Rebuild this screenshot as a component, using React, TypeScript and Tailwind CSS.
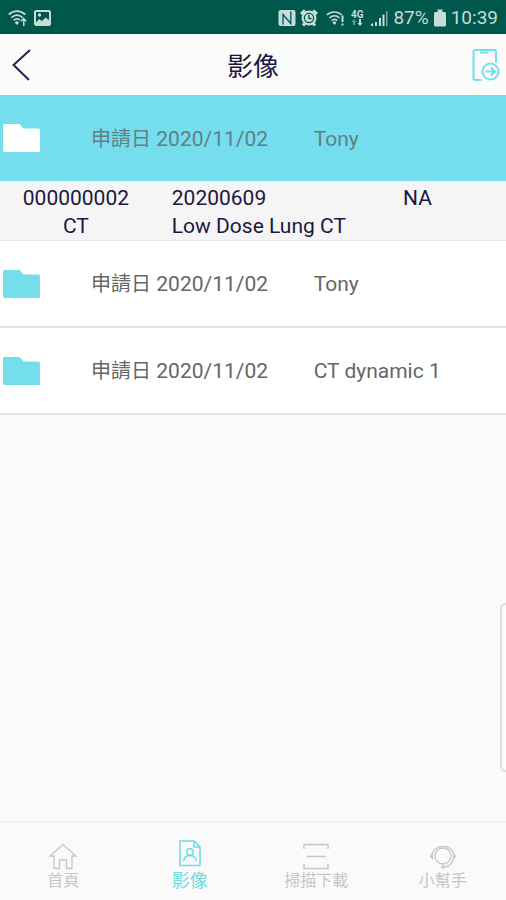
const studies = [
  { id: 1, date: "2020/11/02", name: "Tony", open: true },
  { id: 2, date: "2020/11/02", name: "Tony", open: false },
  { id: 3, date: "2020/11/02", name: "CT dynamic 1", open: false },
];

function StatusBar() {
  return (
    <div className="flex h-[34px] items-center bg-[#00574b] px-2 pt-px text-[#c5dcd8]">
      <svg className="h-[18px] w-5" viewBox="0 0 20 18" fill="none" stroke="currentColor" strokeWidth="1.8">
        <path d="M0.8 5.5C5.5 1 12.5 1 17.2 5.5M3.3 8.6C6.8 5.6 11.2 5.6 14.7 8.6M5.6 11.4C7.8 9.6 10.2 9.6 12 11.2" />
        <path d="M6.6 13.4L9 12l2 1.4L9 16z" fill="currentColor" stroke="none" />
        <path d="M13 12.2l2.6-2.7 2.6 2.7M15.8 10v7" strokeWidth="1.5" />
      </svg>
      <svg className="ml-[6px] h-[18px] w-[17px]" viewBox="0 0 17 18">
        <path fillRule="evenodd" fill="currentColor" d="M1.5 1h14l1.500 1.500v13L15.500 17h-14L0 15.500v-13zM2 3v10.500l3-3.500 3 2 3.500-3.500L15 11V3z" />
        <circle cx="5.500" cy="6" r="1.700" fill="currentColor" />
      </svg>
      <div className="ml-auto flex items-center">
        <svg className="h-[18px] w-[18px]" viewBox="0 0 18 18">
          <rect x="0.500" y="1" width="17" height="16" rx="2" fill="currentColor" />
          <path d="M5 15.500V5.500L12.800 14.500V2.500" fill="none" stroke="#00574b" strokeWidth="1.300" />
        </svg>
        <svg className="ml-1 h-[18px] w-[18px]" viewBox="0 0 18 18" fill="none" stroke="currentColor">
          <path d="M1 5l4-3.500M17 5l-4-3.500M3 16.500l2.500-3M15 16.500l-2.500-3" strokeWidth="3" />
          <circle cx="9" cy="9" r="7.500" fill="currentColor" stroke="none" />
          <circle cx="9" cy="9" r="4.600" stroke="#00574b" strokeWidth="1.200" />
          <path d="M9 6v3.500h2.500" stroke="#00574b" strokeWidth="1.300" />
        </svg>
        <svg className="ml-2 h-[18px] w-5" viewBox="0 0 20 18" fill="none" stroke="currentColor" strokeWidth="1.600">
          <path d="M0.800 6C5 2 11.500 2 16 6M3.300 9C6.500 6 10.500 6 13.500 9M5.600 11.700C7.500 10 9.500 10 11.300 11.700" />
          <path d="M6.300 13.500L8.500 12.300l2 1.200-2 2.500z" fill="currentColor" stroke="none" />
          <path d="M16.500 6.500v6.500M16.500 14.500v2" strokeWidth="2" />
        </svg>
        <div className="ml-1 flex w-[14px] flex-col items-center">
          <span className="font-['Roboto'] text-[10px] leading-[9px] font-bold">4G</span>
          <svg className="h-[7px] w-3" viewBox="0 0 12 7" fill="currentColor">
            <path d="M3 0l2.500 3H4v3H2V3H.5z" opacity=".5" />
            <path d="M9 7L6.500 4H8V0h2v4h1.500z" />
          </svg>
        </div>
        <svg className="ml-[6px] h-[18px] w-[18px]" viewBox="0 0 18 18" fill="currentColor">
          <path d="M1 15l2-1v3H1zM5 13h2v4H5zM9 9h2v8H9zM12.500 5.500h2V17h-2z" />
          <path d="M16 2h1.500v15H16z" opacity=".6" />
        </svg>
        <span className="ml-[5px] font-['Roboto'] text-[19px] leading-6">87%</span>
        <svg className="ml-[5px] h-[18px] w-3" viewBox="0 0 12 18" fill="currentColor">
          <path d="M3.500 0.500h5V3H11l1 1v12.500l-1 1H1l-1-1V4l1-1h2.500z" />
        </svg>
        <span className="ml-[5px] font-['Roboto'] text-[19px] leading-6">10:39</span>
      </div>
    </div>
  );
}

function Header() {
  return (
    <header className="grid h-[61px] grid-cols-[48px_1fr_48px] items-center bg-[#fbfbfc]">
      <button type="button" aria-label="返回" className="pl-3">
        <svg className="h-8 w-5" viewBox="0 0 20 32" fill="none" stroke="#2a2350" strokeWidth="2">
          <path d="M18 1L1.500 16 17 31" />
        </svg>
      </button>
      <h1 className="pt-1 text-center text-[26px] leading-8 text-[#1c1740]">影像</h1>
      <button type="button" aria-label="傳送到手機" className="pl-[14px]">
        <svg className="h-8 w-7" viewBox="0 0 28 32" fill="none" stroke="#73dfec" strokeWidth="2">
          <path d="M9.500 31H3a1.500 1.500 0 0 1-1.500-1.500v-27A1.500 1.500 0 0 1 3 1h19.500A1.500 1.500 0 0 1 24 2.500V14" />
          <path d="M8 3.500h8.500" strokeWidth="2" />
          <circle cx="18.500" cy="22.500" r="8" />
          <path d="M13.500 22.500h9M18.800 18.500l4 4-4 4" />
        </svg>
      </button>
    </header>
  );
}

function StudyRow({ study }: { study: (typeof studies)[number] }) {
  return (
    <button
      type="button"
      aria-expanded={study.open}
      className={
        study.open
          ? "grid h-[86px] w-full grid-cols-[18%_44%_38%] items-center bg-[#74deee] text-left text-[#627f84]"
          : "grid h-[87px] w-full grid-cols-[18%_44%_38%] items-center border-b-2 border-[#e4e4e4] bg-white text-left text-[#666]"
      }
    >
      <svg
        className={study.open ? "ml-[3px] h-7 w-[37px] text-white" : "ml-[3px] h-7 w-[37px] text-[#74deea]"}
        viewBox="0 0 37 28"
        fill="currentColor"
      >
        <path d="M1.500 0H16.500L20.500 4.500H35.500A1.500 1.500 0 0 1 37 6V26.500A1.500 1.500 0 0 1 35.500 28H1.500A1.500 1.500 0 0 1 0 26.500V1.500A1.500 1.500 0 0 1 1.500 0z" />
      </svg>
      <span className="pt-px whitespace-nowrap">
        <span className="text-xl leading-7">申請日</span> {study.date}
      </span>
      <span className="pt-px whitespace-nowrap">{study.name}</span>
    </button>
  );
}

function StudyDetail() {
  return (
    <div className="grid grid-cols-[30%_35%_35%] border-b border-[#e8e8e8] bg-[#f5f5f5] pt-[3px] leading-7 whitespace-nowrap text-[#1c1740]">
      <div className="text-center">000000002</div>
      <div className="pl-5">20200609</div>
      <div className="text-center">NA</div>
      <div className="text-center">CT</div>
      <div className="pl-5">Low Dose Lung CT</div>
    </div>
  );
}

function TabBar() {
  return (
    <nav className="grid h-[79px] grid-cols-4 border-t-2 border-[#f1f1f1] pt-4 text-base leading-5 text-[#c6c6c6]">
      <a href="#home" className="flex flex-col items-center">
        <svg className="h-8 w-7" viewBox="0 0 28 32" fill="none" stroke="currentColor" strokeWidth="1.300">
          <path d="M14 5.500L1 17h4v12.500h5.500v-8.500h7v8.500H23V17h4z" />
        </svg>
        首頁
      </a>
      <a href="#images" aria-current="page" className="flex flex-col items-center text-lg leading-5 text-[#6fdbe4]">
        <svg className="h-8 w-7" viewBox="0 0 28 32" fill="none" stroke="currentColor" strokeWidth="1.500">
          <path d="M4 2h14l6 6v18.500H4zM18 2v6h6" />
          <circle cx="14" cy="13" r="3.300" />
          <path d="M7.500 22.500c.5-4 3-6 6.500-6s6 2 6.500 6" />
        </svg>
        影像
      </a>
      <a href="#scan" className="flex flex-col items-center">
        <svg className="h-8 w-7" viewBox="0 0 28 32" fill="none" stroke="currentColor" strokeWidth="1.500">
          <path d="M2 10V5.500h24V10M2 25v4.500h24V25M4.500 17.500h19.500" />
        </svg>
        掃描下載
      </a>
      <a href="#helper" className="flex flex-col items-center">
        <svg className="h-8 w-7" viewBox="0 0 28 32" fill="none" stroke="currentColor" strokeWidth="1.300">
          <circle cx="14" cy="17" r="8" />
          <path d="M3 15.500a11.500 11.500 0 0 1 22 0M24.500 20.500c-1.500 4.500-5 7.500-10 7.500" />
          <path d="M3.500 15v4.500L1.500 17.200zM24.500 15v4.500l2-2.300z" fill="currentColor" />
          <circle cx="14" cy="28" r="1" fill="currentColor" />
        </svg>
        小幫手
      </a>
    </nav>
  );
}

export default function App() {
  return (
    <div className="relative flex min-h-screen flex-col bg-[#fafafa] font-['Roboto','Noto_Sans_CJK_TC',sans-serif]">
      <StatusBar />
      <Header />
      <main className="flex-1 text-[21px] leading-7">
        {studies.map((study) => (
          <div key={study.id}>
            <StudyRow study={study} />
            {study.open && <StudyDetail />}
          </div>
        ))}
      </main>
      <TabBar />
      {/* edge panel handle */}
      <div className="absolute right-0 bottom-32 h-[169px] w-[6px] rounded-l-md border-2 border-r-0 border-[#dedede] bg-[#fcfcfc]" />
    </div>
  );
}
